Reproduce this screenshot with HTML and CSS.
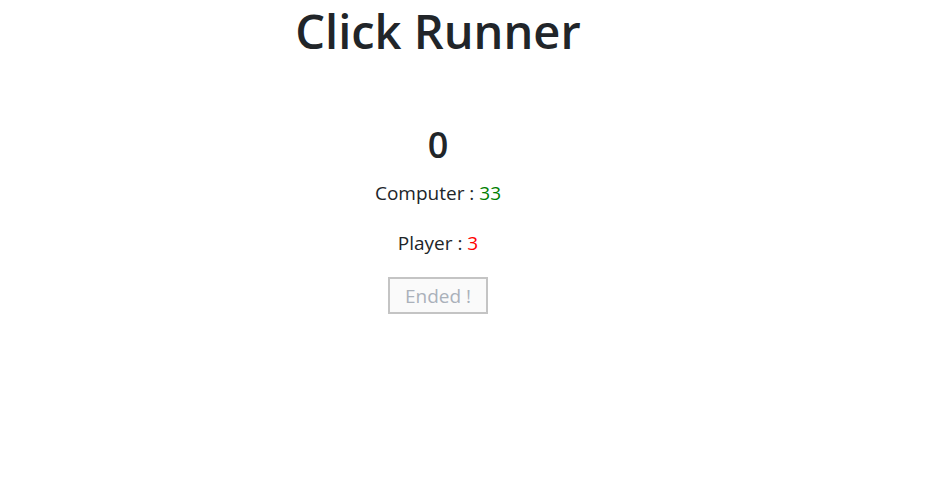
FILE: index.html
```html
<!DOCTYPE html>
<html>
<head>
<meta charset="utf-8">
<link rel="stylesheet" href="styles.css">
</head>
<body>
<div class="app">
  <h1 class="title">Click Runner</h1>
  <div class="game">
    <h2 class="counter">0</h2>
    <p class="score">Computer : <span class="win">33</span></p>
    <p class="score">Player : <span class="lose">3</span></p>
    <button class="btn" disabled>Ended !</button>
  </div>
</div>
</body>
</html>
```
FILE: styles.css
```css
html, body {
  margin: 0;
  padding: 0;
  background: #fff;
}
body {
  font-family: "Open Sans", "Noto Sans", sans-serif;
  color: #212529;
}
.app {
  width: 876px;
  text-align: center;
}
.title {
  margin: 0;
  font-size: 47px;
  font-weight: 600;
  line-height: 64px;
  margin-top: -1px;
}
.game {
  padding-top: 58px;
  display: flex;
  flex-direction: column;
  align-items: center;
}
.counter {
  margin: 0;
  font-size: 36px;
  font-weight: 600;
  line-height: 48px;
}
.score {
  margin: 0;
  font-size: 19px;
  line-height: 27px;
  margin-top: 11px;
}
.score + .score {
  margin-top: 23px;
}
.win { color: green; }
.lose { color: red; }
.btn {
  margin-top: 20px;
  font-family: inherit;
  font-size: 19px;
  padding: 2px 10px;
  border: 2px solid #c4c4c4;
  background: #fafafa;
  color: #aab1ba;
  width: 100px;
  height: 37px;
}
```
